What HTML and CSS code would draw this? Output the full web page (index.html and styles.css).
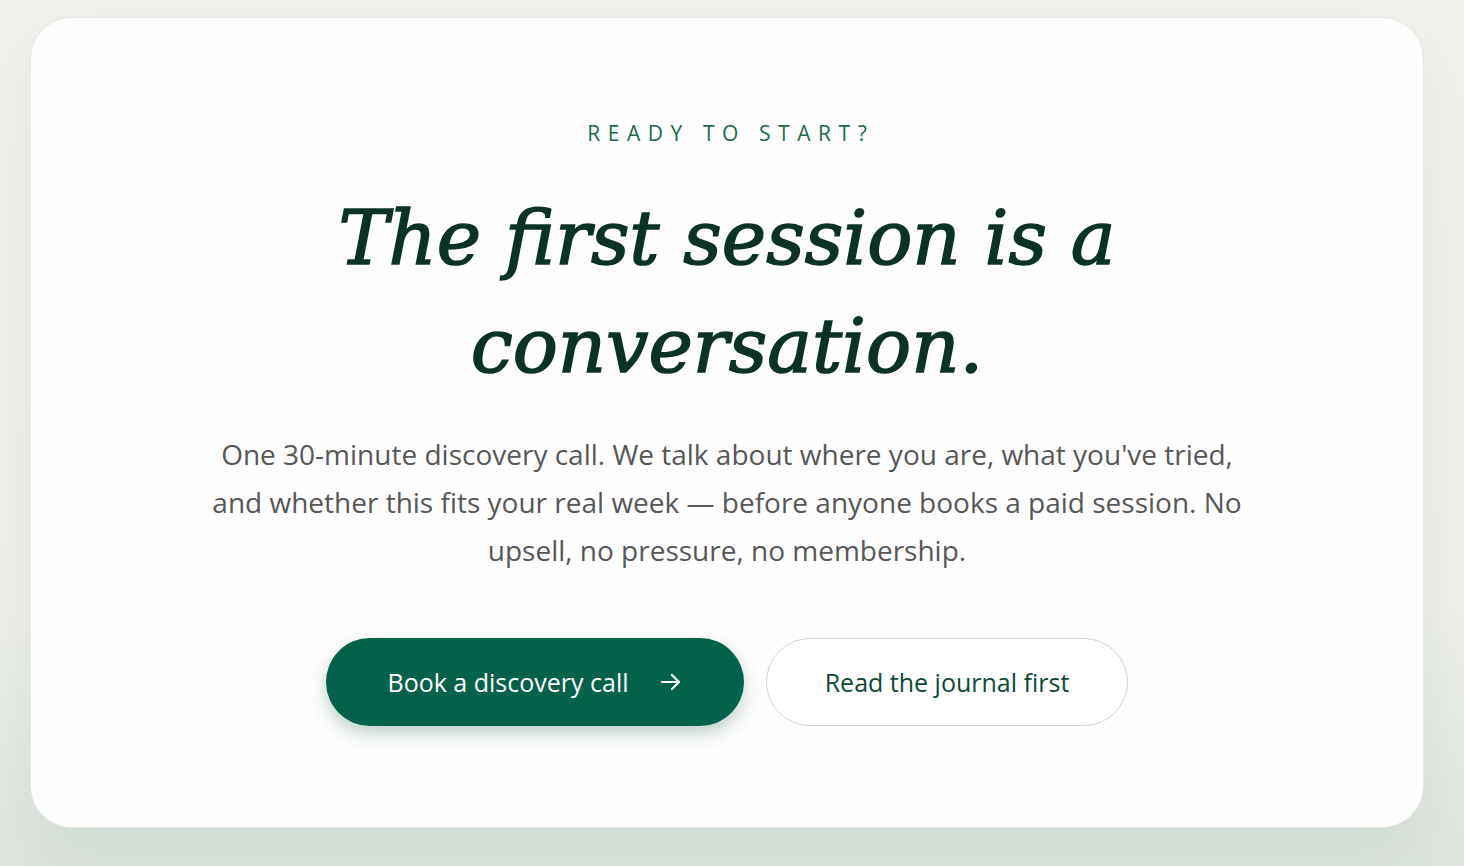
FILE: index.html
```html
<!DOCTYPE html>
<html lang="en">
<head>
    <meta charset="UTF-8" />
    <meta name="viewport" content="width=device-width, initial-scale=1.0" />
    <title>Ready to start?</title>
    <link rel="stylesheet" href="styles.css">
</head>
<body>
    <section class="cta">
        <p class="eyebrow">Ready to start?</p>
        <h2 class="cta-title">The first session is a conversation.</h2>
        <p class="cta-text">
            One 30-minute discovery call. We talk about where you are, what you've tried,
            and whether this fits your real week — before anyone books a paid session. No
            upsell, no pressure, no membership.
        </p>
        <div class="cta-actions">
            <a class="btn btn-primary" href="#">
                Book a discovery call
                <svg class="btn-arrow" width="24" height="24" viewBox="0 0 24 24" fill="none" stroke="currentColor" stroke-width="2.2" stroke-linecap="round" stroke-linejoin="round">
                    <path d="M3 12h17"/>
                    <path d="M13 5l7 7-7 7"/>
                </svg>
            </a>
            <a class="btn btn-secondary" href="#">Read the journal first</a>
        </div>
    </section>
</body>
</html>
```

FILE: styles.css
```css
html, body {
    height: 100%;
}

body {
    margin: 0;
    padding: 17px 40px 0 30px;
    box-sizing: border-box;
    font-family: "Open Sans", Arial, sans-serif;
    background: linear-gradient(180deg, #f1f1ec 0%, #eeefea 70%, #dde5de 100%);
}

.cta {
    background: #fefefe;
    border: 1px solid #e6e8e3;
    border-radius: 42px;
    box-shadow: 0 30px 60px rgba(40, 90, 60, 0.08);
    padding: 103px 40px 101px;
    text-align: center;
}

.eyebrow {
    margin: 0;
    font-size: 21px;
    font-weight: 500;
    line-height: 24px;
    letter-spacing: 0.36em;
    text-transform: uppercase;
    color: #1a684d;
    padding-left: 0.36em;
}

.cta-title {
    margin: 39px auto 0;
    max-width: 900px;
    font-family: "DejaVu Serif", "Liberation Serif", serif;
    font-style: italic;
    font-weight: 400;
    font-size: 75px;
    line-height: 108px;
    color: #0b3324;
    -webkit-text-stroke: 1.6px #0b3324;
}

.cta-text {
    margin: 30px auto 0;
    max-width: 1040px;
    font-size: 28px;
    line-height: 48px;
    color: #575757;
}

.cta-actions {
    margin-top: 64px;
    display: flex;
    justify-content: center;
    gap: 22px;
}

.btn {
    display: inline-flex;
    align-items: center;
    justify-content: center;
    gap: 30px;
    height: 88px;
    box-sizing: border-box;
    border-radius: 44px;
    font-size: 25px;
    text-decoration: none;
}

.btn-primary {
    width: 418px;
    background: #05624a;
    color: #ffffff;
    box-shadow: 0 8px 18px rgba(5, 70, 50, 0.25);
}

.btn-secondary {
    width: 362px;
    background: #ffffff;
    border: 1px solid #cfd4d2;
    color: #0c4a36;
}

.btn-arrow {
    flex: none;
}
```
